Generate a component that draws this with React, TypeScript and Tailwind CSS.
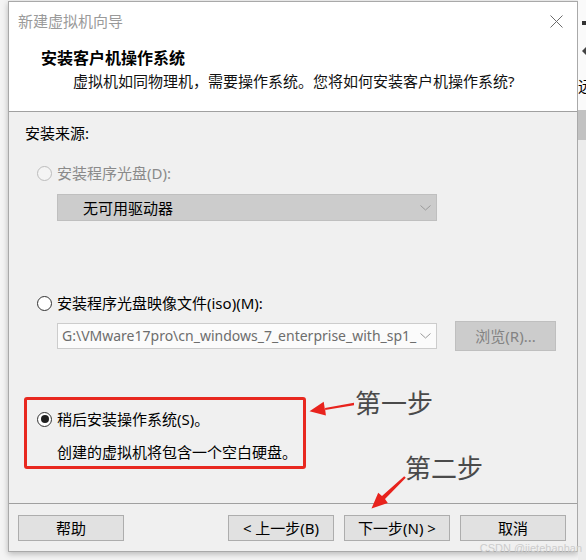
import React from "react";

const ui = "font-['Noto_Sans','Noto_Sans_CJK_SC',sans-serif]";

function Radio({ state }: { state: "disabled" | "off" | "on" }) {
  if (state === "disabled") {
    return <span className="w-[15px] h-[15px] rounded-full border border-[#bcbcbc] bg-[#f4f4f4] shrink-0" />;
  }
  return (
    <span className="w-[15px] h-[15px] rounded-full border border-[#333333] bg-white shrink-0 flex items-center justify-center">
      {state === "on" && <span className="w-[8px] h-[8px] rounded-full bg-[#1f1f1f]" />}
    </span>
  );
}

function Chevron() {
  return (
    <svg width="11" height="6" viewBox="0 0 11 6" className="shrink-0">
      <polyline points="0.5,0.5 5.5,5 10.5,0.5" fill="none" stroke="#9a9a9a" strokeWidth="1" />
    </svg>
  );
}

function Btn({ children }: { children: React.ReactNode }) {
  return (
    <div className="w-[106px] h-[26px] bg-[#e1e1e1] border border-[#adadad] flex items-center justify-center text-[15px] text-black">
      {children}
    </div>
  );
}

export default function App() {
  return (
    <div className={`relative w-[586px] h-[560px] overflow-hidden bg-[#f4f4f4] flex ${ui}`}>
      {/* left edge of desktop */}
      <div className="w-[8px] shrink-0" />

      {/* Wizard dialog */}
      <div className="mt-[1px] w-[570px] h-[551px] shrink-0 border border-[#a9a9a9] bg-white flex flex-col shadow-[0_2px_6px_rgba(0,0,0,0.25)]">
        {/* Title bar */}
        <div className="h-[38px] flex items-center justify-between pl-[9px] pr-[14px]">
          <span className="text-[15px] leading-[20px] text-[#9a9a9a]">新建虚拟机向导</span>
          <svg width="13" height="13" viewBox="0 0 13 13">
            <path d="M0.5 0.5 L12.5 12.5 M12.5 0.5 L0.5 12.5" stroke="#6b6b6b" strokeWidth="1" />
          </svg>
        </div>

        {/* Header */}
        <div className="h-[71px] pt-[8px] flex flex-col">
          <div className="pl-[32px] text-[16px] leading-[20px] font-bold text-black">安装客户机操作系统</div>
          <div className="mt-[3px] pl-[64px] text-[15px] leading-[20px] text-[#111111]">
            虚拟机如同物理机，需要操作系统。您将如何安装客户机操作系统?
          </div>
        </div>
        <div className="h-px bg-[#a0a0a0]" />

        {/* Body */}
        <div className="h-[391px] bg-[#f0f0f0] pt-[11px] flex flex-col text-[15px] leading-[20px]">
          <div className="pl-[16px] text-black">安装来源:</div>

          <div className="mt-[20px] pl-[28px] h-[20px] flex items-center gap-[5px]">
            <Radio state="disabled" />
            <span className="text-[#8a8a8a]">安装程序光盘(D):</span>
          </div>
          <div className="mt-[11px] ml-[48px] w-[380px] h-[27px] bg-[#cccccc] border border-[#bfbfbf] flex items-center justify-between pl-[25px] pr-[5px]">
            <span className="text-black">无可用驱动器</span>
            <Chevron />
          </div>

          <div className="mt-[72px] pl-[28px] h-[20px] flex items-center gap-[5px]">
            <Radio state="off" />
            <span className="text-black">安装程序光盘映像文件(iso)(M):</span>
          </div>
          <div className="mt-[8px] ml-[48px] flex items-center gap-[18px]">
            <div className="w-[380px] h-[26px] bg-[#fbfbfb] border border-[#cccccc] flex items-center justify-between pl-[4px] pr-[5px]">
              <span className="whitespace-nowrap text-[14px] text-[#6d6d6d]">
                G:\VMware17pro\cn_windows_7_enterprise_with_sp1_
              </span>
              <Chevron />
            </div>
            <div className="w-[101px] h-[30px] bg-[#cccccc] border border-[#bfbfbf] flex items-center justify-center text-[#838383]">
              浏览(R)...
            </div>
          </div>

          {/* highlighted option */}
          <div className="mt-[46px] ml-[15px] w-[282px] h-[72px] border-[3px] border-[#e8281f] rounded-[3px] pt-[9px] flex flex-col">
            <div className="pl-[10px] h-[20px] flex items-center gap-[5px]">
              <Radio state="on" />
              <span className="text-black">稍后安装操作系统(S)。</span>
            </div>
            <div className="mt-[13px] pl-[30px] text-black">创建的虚拟机将包含一个空白硬盘。</div>
          </div>
        </div>
        <div className="h-px bg-[#a0a0a0]" />

        {/* Footer */}
        <div className="h-[47px] bg-[#f0f0f0] pt-[11px] pl-[9px] pr-[11px] flex items-start justify-between">
          <Btn>帮助</Btn>
          <div className="flex gap-[10px]">
            <Btn>&lt; 上一步(B)</Btn>
            <Btn>下一步(N) &gt;</Btn>
            <Btn>取消</Btn>
          </div>
        </div>
      </div>

      {/* right edge of desktop */}
      <div className="w-[8px] shrink-0 flex flex-col overflow-hidden">
        <div className="h-[110px] bg-[#fafafa] flex flex-col pt-[21px] pl-[4px]">
          <span className="w-[4px] h-[4px] bg-[#333333]" />
          <span className="mt-[22px] w-0 h-0 border-y-[4px] border-y-transparent border-r-[4px] border-r-[#444444]" />
          <span className="mt-[21px] -ml-[4px] text-[15px] leading-[20px] text-black whitespace-nowrap">远</span>
        </div>
        <div className="h-[30px] bg-[#c2c2c2]" />
        <div className="flex-1 bg-[#ececec]" />
      </div>

      {/* annotations */}
      <div className="absolute left-[355px] top-[390px] text-[26px] leading-[26px] text-[#4a4a4a]">第一步</div>
      <div className="absolute left-[405px] top-[455px] text-[26px] leading-[26px] text-[#4a4a4a]">第二步</div>
      <svg className="absolute left-0 top-0 pointer-events-none" width="586" height="560" viewBox="0 0 586 560">
        <polygon points="354,402.8 354,405.2 325,410 323.7,401.7 309.5,411.3 325.9,415.5 325,408" fill="#e8231d" />
        <polygon points="404.2,476.2 405.8,477.8 385,499 387.8,503 371.5,508.5 378.2,492.7 382,496" fill="#e8231d" />
      </svg>

      {/* watermark */}
      <div className="absolute right-[4px] top-[541px] text-[11px] leading-[14px] text-[#cccccc] font-['Liberation_Sans',sans-serif]">
        CSDN @jietehanhan
      </div>
    </div>
  );
}
